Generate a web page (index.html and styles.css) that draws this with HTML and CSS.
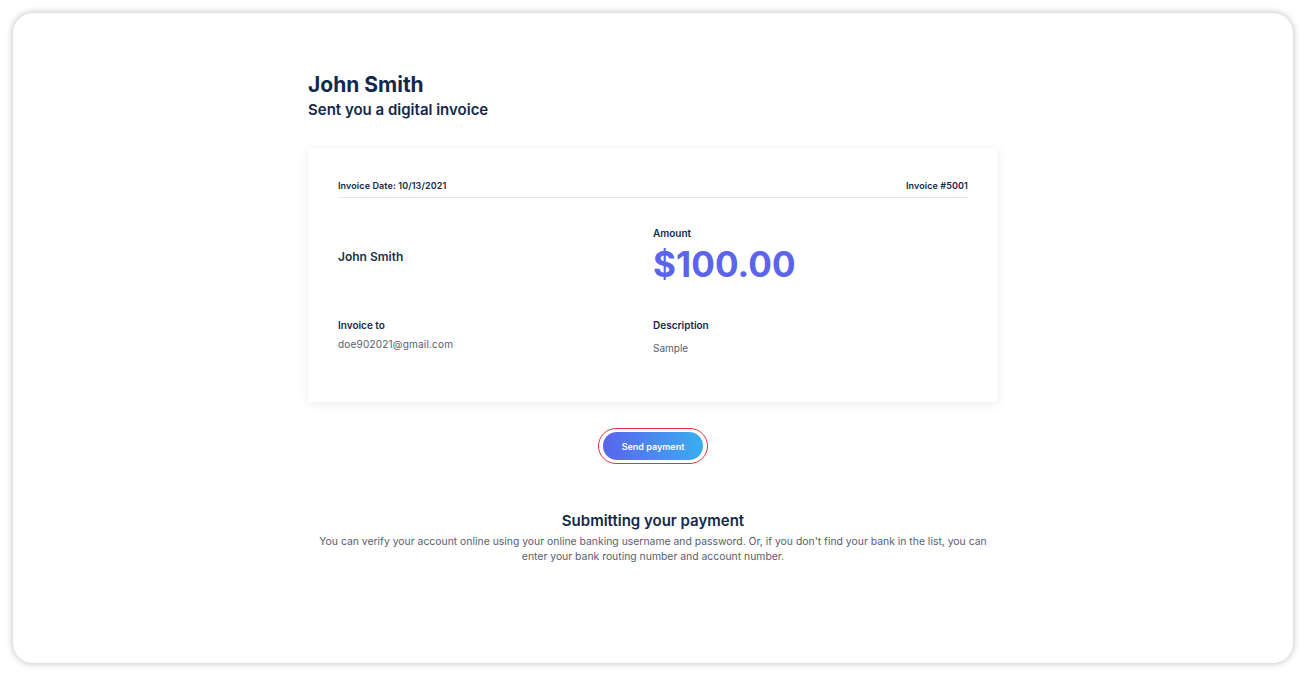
FILE: index.html
```html
<!DOCTYPE html>
<html>
<head>
<meta charset="utf-8">
<link rel="stylesheet" href="styles.css">
</head>
<body>
<div class="frame">
  <main class="content">
    <header class="intro">
      <h1 class="sender">John Smith</h1>
      <h2 class="subtitle">Sent you a digital invoice</h2>
    </header>
    <section class="card">
      <div class="card-head">
        <span>Invoice Date: 10/13/2021</span>
        <span>Invoice #5001</span>
      </div>
      <div class="grid">
        <div class="cell cell-name">John Smith</div>
        <div class="cell">
          <div class="label">Amount</div>
          <div class="amount">$100.00</div>
        </div>
        <div class="cell">
          <div class="label">Invoice to</div>
          <div class="value">doe902021@gmail.com</div>
        </div>
        <div class="cell">
          <div class="label">Description</div>
          <div class="value value-desc">Sample</div>
        </div>
      </div>
    </section>
    <div class="actions">
      <div class="focus-ring"><button class="btn">Send payment</button></div>
    </div>
    <section class="info">
      <h3 class="info-title">Submitting your payment</h3>
      <p class="info-text">You can verify your account online using your online banking username and password. Or, if you don't find your bank in the list, you can enter your bank routing number and account number.</p>
    </section>
  </main>
</div>
</body>
</html>
```

FILE: styles.css
```css
* { box-sizing: border-box; }
html, body { margin: 0; padding: 0; background: #ffffff; }
body {
  font-family: Inter, "Noto Sans", sans-serif;
  color: #172b4d;
  padding: 13px;
}
.frame {
  height: 650px;
  background: #fff;
  border-radius: 20px;
  box-shadow: 0 0 6px 1px rgba(0,0,0,0.22);
  display: flex;
  justify-content: center;
}
.content {
  width: 690px;
  padding-top: 58px;
}
.sender {
  margin: 0;
  font-size: 21px;
  font-weight: 700;
  line-height: 28px;
  color: #13294b;
}
.subtitle {
  margin: 0;
  font-size: 15px;
  font-weight: 600;
  line-height: 22px;
  color: #13294b;
}
.card {
  margin-top: 27px;
  background: #fff;
  box-shadow: 0 2px 10px rgba(0,0,0,0.08);
  padding: 32px 30px 0 30px;
  height: 254px;
}
.card-head {
  display: flex;
  justify-content: space-between;
  font-size: 9px;
  font-weight: 600;
  letter-spacing: 0.1px;
  color: #13294b;
  padding-bottom: 5px;
  border-bottom: 1px solid #e4e6ea;
  line-height: 12px;
}
.grid {
  display: grid;
  grid-template-columns: 315px 1fr;
  grid-template-rows: 92px auto;
  margin-top: 28px;
}
.cell-name {
  font-size: 12px;
  font-weight: 600;
  color: #1f2f4a;
  padding-top: 23px;
}
.label {
  font-size: 10px;
  font-weight: 600;
  color: #13294b;
  line-height: 14px;
}
.amount {
  font-size: 35px;
  font-weight: 700;
  color: #5c65ea;
  line-height: 42px;
  margin-top: 3px;
  letter-spacing: 0.1px;
}
.value {
  font-size: 10px;
  color: #55606f;
  margin-top: 5px;
  line-height: 14px;
  letter-spacing: 0.2px;
}
.value-desc { margin-top: 9px; letter-spacing: 0; }
.actions {
  display: flex;
  justify-content: center;
  margin-top: 26px;
}
.focus-ring {
  border: 1px solid #e8323c;
  border-radius: 20px;
  padding: 3px 4px;
}
.btn {
  width: 100px;
  height: 28px;
  border: none;
  border-radius: 14px;
  background: linear-gradient(90deg, #5a64ec 0%, #38aef0 100%);
  color: #fff;
  font-family: Inter, sans-serif;
  font-size: 9px;
  font-weight: 600;
  display: block;
}
.info {
  text-align: center;
  margin-top: 46px;
}
.info-title {
  margin: 0;
  font-size: 15px;
  font-weight: 600;
  color: #13294b;
  line-height: 21px;
}
.info-text {
  margin: 3px 0 0 0;
  padding: 0 9px;
  font-size: 10.4px;
  color: #55606f;
  line-height: 15px;
}
```
